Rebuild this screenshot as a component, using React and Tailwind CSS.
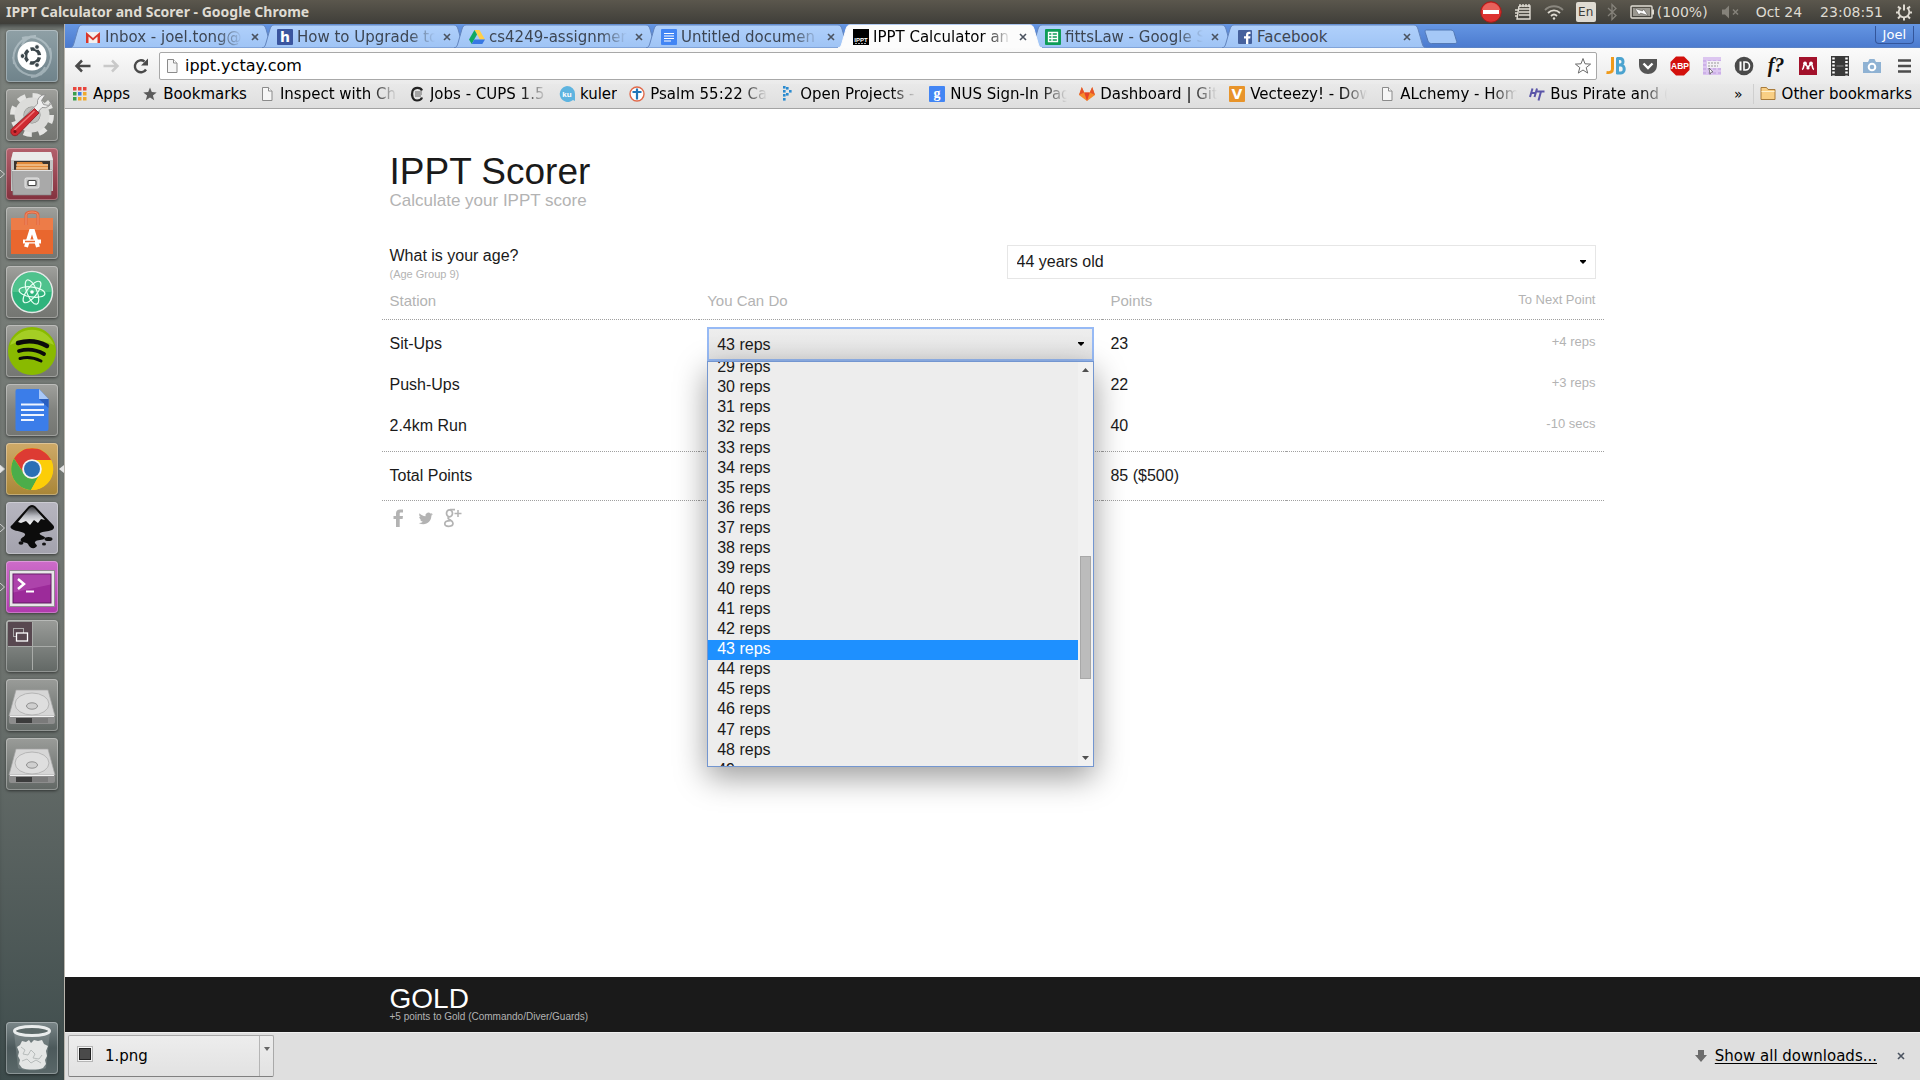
import React from 'react';

const FADE = '[mask-image:linear-gradient(to_right,black_calc(100%-26px),transparent)]';

/* ---------- small icons ---------- */

const PageIcon = () => (
  <svg viewBox="0 0 16 16" className="h-4 w-4">
    <path d="M3.500 1.500h6l3.500 3.500v9.500h-9.500z" fill="#f6f6f6" stroke="#8b8b8b" />
    <path d="M9.500 1.500v3.500h3.500" fill="#fff" stroke="#8b8b8b" />
  </svg>
);

const Gmail = () => (
  <svg viewBox="0 0 16 16" className="h-4 w-4">
    <path d="M1 3h14v11H1z" fill="#f4f0ee" />
    <path d="M1 14V3l7 6 7-6v11h-2.500V7.500L8 11.500 3.500 7.500V14z" fill="#d9372b" />
  </svg>
);

const Letter = ({ bg, children, fg = '#fff', size = 14, y = 13, family = 'DejaVu Sans' }) => (
  <svg viewBox="0 0 16 16" className="h-4 w-4">
    <rect width="16" height="16" rx="1" fill={bg} />
    <text x="8" y={y} fill={fg} fontSize={size} fontWeight="700" fontFamily={family} textAnchor="middle">{children}</text>
  </svg>
);

const Drive = () => (
  <svg viewBox="0 0 16 16" className="h-4 w-4">
    <path d="M5.500 1h5L16 10.500h-5z" fill="#ffcf48" />
    <path d="M5.500 1 8 5.500 2.700 15 0 10.500z" fill="#11a861" />
    <path d="M5.300 10.500H16L13.300 15H2.700z" fill="#3777e3" />
  </svg>
);

const DocIcon = () => (
  <svg viewBox="0 0 16 16" className="h-4 w-4">
    <rect width="16" height="16" rx="1" fill="#4285f4" />
    <path d="M3 4.500h10M3 7h10M3 9.500h10M3 12h7" stroke="#fff" strokeWidth="1.200" />
  </svg>
);

const IpptIcon = () => (
  <svg viewBox="0 0 16 16" className="h-4 w-4">
    <rect width="16" height="16" fill="#000" />
    <text x="8" y="12.500" fill="#fff" fontSize="6" fontWeight="700" fontFamily="Liberation Sans" textAnchor="middle">IPPT</text>
    <path d="M2 14.500h12" stroke="#aaa" strokeDasharray="2 1" />
  </svg>
);

const SheetIcon = () => (
  <svg viewBox="0 0 16 16" className="h-4 w-4">
    <rect width="16" height="16" rx="1" fill="#0f9d58" />
    <path d="M3.500 3.500h9v9h-9zM3.500 6.500h9M3.500 9.500h9M7 3.500v9" fill="none" stroke="#fff" strokeWidth="1.300" />
  </svg>
);

const Facebook = () => (
  <svg viewBox="0 0 16 16" className="h-4 w-4">
    <rect x="1" y="1" width="14" height="14" rx="1" fill="#45619d" />
    <path d="M9 15V9.500H7V7.300h2V6c0-2.200 1.200-3.200 3-3.200h1.500V5h-1.200c-.8 0-1 .4-1 1.100v1.200h2.200l-.3 2.200h-1.900V15z" fill="#fff" />
  </svg>
);

const AppsIcon = () => (
  <svg viewBox="0 0 16 16" className="h-4 w-4">
    {['#e8453c', '#e8453c', '#e8453c', '#3a9f4b', '#3f7de0', '#f0a92c', '#3a9f4b', '#f0a92c', '#f0a92c'].map((c, i) => (
      <rect key={i} x={1 + (i % 3) * 5} y={1 + Math.floor(i / 3) * 5} width="3.500" height="3.500" fill={c} />
    ))}
  </svg>
);

const StarSolid = () => (
  <svg viewBox="0 0 16 16" className="h-4 w-4">
    <path d="m8 1.500 1.800 4.600 4.900.3-3.800 3.100 1.300 4.800L8 11.600l-4.200 2.700 1.300-4.800-3.800-3.100 4.900-.3z" fill="#5b5b5b" />
  </svg>
);

const Cups = () => (
  <svg viewBox="0 0 16 16" className="h-4 w-4" fill="none" stroke="#222">
    <path d="M13 4.500C11.500 1 5 .8 3.500 5 2 10 4 14.500 8 14.500c3 0 4.500-1.500 5-3" strokeWidth="2.200" />
    <path d="M6 6h7M6 8h7M6 10h6" strokeWidth="1.200" stroke="#666" />
  </svg>
);

const Kuler = () => (
  <svg viewBox="0 0 16 16" className="h-4 w-4">
    <path d="M8 0a8 8 0 0 1 8 8v7l-2-1A8 8 0 1 1 8 0z" fill="#5eb4e0" />
    <text x="8" y="11" fontSize="8" fontWeight="700" fill="#fff" textAnchor="middle" fontFamily="Liberation Sans">ku</text>
  </svg>
);

const Cross = () => (
  <svg viewBox="0 0 16 16" className="h-4 w-4">
    <circle cx="8" cy="8" r="7" fill="#fff" stroke="#e0694a" strokeWidth="1.400" />
    <path d="M8 2.500v11M3.500 6h9" stroke="#2477b8" strokeWidth="2.200" />
  </svg>
);

const Dots = () => (
  <svg viewBox="0 0 16 16" className="h-4 w-4" fill="#2b8bd0">
    {[[4, 0], [7, 1], [10, 4], [7, 7], [4, 8], [4, 12], [4, 4]].map(([x, y], i) => (
      <rect key={i} x={x} y={y} width="2.600" height="2.600" />
    ))}
  </svg>
);

const Gitlab = () => (
  <svg viewBox="0 0 16 16" className="h-4 w-4">
    <path d="M8 15 0 9l2.800-8 2.400 5.500h5.600L13.200 1 16 9z" fill="#f58a2c" />
    <path d="M8 15 5.200 6.500h5.600z" fill="#e5432a" />
    <path d="m0 9 2.800-8 2.400 5.500zM16 9l-2.800-8-2.400 5.500z" fill="#e5532a" />
  </svg>
);

const Ht = () => (
  <svg viewBox="0 0 16 16" className="h-4 w-4" fill="none" stroke="#5a55a8" strokeWidth="2">
    <path d="M3.500 2.500 1 11M8 2.500 5.500 11M2 7h5M8 5.500h7.500M12 5.500 9.500 14.500" />
  </svg>
);

const Folder = () => (
  <svg viewBox="0 0 16 16" className="h-4 w-4">
    <path d="M1 13.500v-12h5.500l1.500 2h7v10z" fill="#f9cf84" stroke="#a87b3c" />
    <path d="M1.500 5.500h13" stroke="#fff0cc" />
  </svg>
);

const Close = ({ label }) => (
  <button type="button" aria-label={label} className="flex h-4 w-4 shrink-0 items-center justify-center">
    <svg viewBox="0 0 8 8" className="h-2 w-2"><path d="m1 1 6 6M7 1 1 7" stroke="#4b5360" strokeWidth="1.600" /></svg>
  </button>
);

/* ---------- desktop panel ---------- */

const TopPanel = () => (
  <header className="flex h-6 items-center justify-between bg-linear-to-b from-[#5b574d] to-[#3f3e39] pr-[7px] pl-1.5 text-[#dfdbd2]">
    <span className="font-['Noto_Sans',sans-serif] text-sm font-bold">IPPT Calculator and Scorer - Google Chrome</span>
    <div className="flex items-center text-sm">
      <svg viewBox="0 0 22 22" className="h-[22px] w-[22px]">
        <circle cx="11" cy="11" r="10.300" fill="#dd3230" stroke="#a81d1a" />
        <path d="M2 9a9.200 9.200 0 0 1 18 0z" fill="#f08078" opacity=".6" />
        <rect x="3" y="9" width="16" height="4" fill="#fff" />
      </svg>
      <svg viewBox="0 0 18 18" className="ml-3 h-[18px] w-[18px]" fill="none" stroke="#dfdbd2" strokeWidth="1.400">
        <path d="M5 3h11v13H3l2-13M5 6h11M5 9h11M5 12h11M6 1v3M9 1v3M12 1v3M15 1v3" />
        <path d="M1 7h3M1 10h3M1 13h3" />
      </svg>
      <svg viewBox="0 0 20 18" className="ml-3 h-[18px] w-5" fill="none" stroke="#dfdbd2" strokeWidth="1.800">
        <path d="M1 7c5-5 13-5 18 0" stroke="#8a877f" />
        <path d="M4 10c3.500-3.500 8.500-3.500 12 0M7 13c2-2 4-2 6 0" />
        <circle cx="10" cy="15.500" r="1.200" fill="#dfdbd2" stroke="none" />
      </svg>
      <span className="ml-3 flex h-5 w-5 items-center justify-center rounded-xs bg-[#dfdbd2] text-xs text-[#3c3b37]">En</span>
      <svg viewBox="0 0 12 18" className="ml-2.5 h-[18px] w-3" fill="none" stroke="#85827a" strokeWidth="1.300">
        <path d="m2 5 8 7.500-4 4V1.500l4 4L2 13" />
      </svg>
      <svg viewBox="0 0 25 14" className="ml-3 h-3.5 w-[25px]">
        <rect x="1" y="1" width="21" height="12" rx="1" fill="none" stroke="#dfdbd2" strokeWidth="1.400" />
        <rect x="3" y="3" width="17" height="8" fill="#9b9890" />
        <path d="M23 4.500v5" stroke="#dfdbd2" strokeWidth="2" />
        <path d="M5 3.500 12.500 6l1-2L18 10.500 10.500 8l-1.500 2z" fill="#fff" stroke="#4a4843" strokeWidth=".5" />
      </svg>
      <span className="ml-0.5">(100%)</span>
      <svg viewBox="0 0 18 14" className="ml-3.5 h-3.5 w-[18px]">
        <path d="M0 4.500h3l4-4v13l-4-4H0z" fill="#85827a" />
        <path d="m11 4.500 5 5m0-5-5 5" stroke="#85827a" strokeWidth="1.500" />
      </svg>
      <span className="ml-4">Oct 24</span>
      <span className="ml-[18px]">23:08:51</span>
      <svg viewBox="0 0 18 18" className="ml-3 h-[18px] w-[18px]" fill="none" stroke="#dfdbd2">
        <path d="M6 4.700a5.300 5.300 0 1 0 6 0" strokeWidth="1.800" />
        <path d="M9 1.500v6" strokeWidth="2" />
        <path d="M9 14v3.500M1 9.500h3M14 9.500h3M3 3.500 5.200 5.700M15 3.500l-2.200 2.200M3 15.500l2.200-2.200M15 15.500l-2.200-2.200" strokeWidth="2" />
      </svg>
    </div>
  </header>
);

/* ---------- launcher ---------- */

const art = 'h-[52px] w-[52px]';

const UbuntuArt = () => (
  <svg viewBox="0 0 52 52" className={art}>
    <path d="M8 34C5 18 16 6 30 6c-8 1-12 4-14 9M44 18c4 14-4 28-19 29 8-2 12-5 14-10M16 8c14-4 28 4 29 19M36 44C22 49 9 41 7 27" fill="none" stroke="#d5e0e4" strokeWidth="2" opacity=".45" />
    <circle cx="26" cy="26" r="14.500" fill="#fff" />
    <circle cx="26.500" cy="26" r="7" fill="none" stroke="#3b464b" strokeWidth="3.500" strokeDasharray="12 2.660" strokeDashoffset="-1.500" />
    <circle cx="16.500" cy="26" r="2.400" fill="#3b464b" stroke="#fff" />
    <circle cx="31" cy="17" r="2.400" fill="#3b464b" stroke="#fff" />
    <circle cx="31" cy="35" r="2.400" fill="#3b464b" stroke="#fff" />
  </svg>
);

const SettingsArt = () => (
  <svg viewBox="0 0 52 52" className={art}>
    <circle cx="26" cy="26" r="19" fill="none" stroke="#e4e4e2" strokeWidth="6" strokeDasharray="8 6.920" />
    <circle cx="26" cy="26" r="13" fill="none" stroke="#dcdcda" strokeWidth="9" />
    <circle cx="26" cy="26" r="8" fill="#bdbdbb" />
    <path d="M46 11.500a8 8 0 0 1-10 7L12 45a4 4 0 0 1-6-5.500L31.500 15a8 8 0 0 1 8-9.500l-4 6 2 4 5 1z" fill="#eee" stroke="#888" strokeWidth=".8" />
    <path d="M28.500 19.500 33 24 12 45.500a4.200 4.200 0 0 1-6-6z" fill="#cf2a31" stroke="#8d151c" strokeWidth=".8" />
    <path d="m28.500 22-20 19" stroke="#ef7577" strokeWidth="1.500" />
    <circle cx="9" cy="42.500" r="1.500" fill="#7a1016" />
  </svg>
);

const FilesArt = () => (
  <svg viewBox="0 0 52 52" className={art}>
    <path d="M7 4h38l2 8v31H5V12z" fill="#c3c3c3" />
    <path d="M7 4h38l2 8H5z" fill="#eaeaea" />
    <path d="M8 13h36v9H8z" fill="#3a3430" />
    <path d="M11 14h25l1 2h5v6H10z" fill="#e0893a" />
    <path d="M10 17h32M10 20h32" stroke="#fbe3c0" strokeWidth="1.200" />
    <path d="M6 22h40l-1 25H7z" fill="#a9a9a9" stroke="#888" strokeWidth=".6" />
    <path d="M6 22.500h40" stroke="#e0e0e0" />
    <rect x="19" y="30" width="14" height="10" rx="1.500" fill="#c7c7c7" stroke="#e7e7e7" />
    <rect x="22" y="32.500" width="8" height="5" rx="1" fill="#fff" stroke="#444" strokeWidth="1.200" />
  </svg>
);

const SoftwareArt = () => (
  <svg viewBox="0 0 52 52" className={art}>
    <path d="M5 11h42v36H5z" fill="#e9672e" />
    <path d="M5 11h42v12H5z" fill="#f08a5a" opacity=".6" />
    <path d="M20 18V8c0-4 12-4 12 0v10" fill="none" stroke="#e0643c" strokeWidth="3" />
    <path d="M20 18V8c0-4 12-4 12 0v10" fill="none" stroke="#f19470" strokeWidth="1" />
    <path d="M20 40 25 24h2l5 16" fill="none" stroke="#fff" strokeWidth="4" />
    <path d="M17 34.500h18" stroke="#fff" strokeWidth="4" />
    <path d="M19 34.500h10" stroke="#e9672e" strokeWidth="1.500" />
  </svg>
);

const AtomArt = () => (
  <svg viewBox="0 0 52 52" className={art}>
    <circle cx="26" cy="26" r="20.500" fill="#2fb37c" stroke="#e5e9e7" strokeWidth="1.500" />
    <path d="M6.500 26a19.500 19.500 0 0 1 39 0z" fill="#8ddfae" opacity=".35" />
    <g fill="none" stroke="#e6fff2" strokeWidth="1.200">
      <ellipse cx="26" cy="26" rx="13" ry="5" transform="rotate(8 26 26)" />
      <ellipse cx="26" cy="26" rx="13" ry="5" transform="rotate(68 26 26)" />
      <ellipse cx="26" cy="26" rx="13" ry="5" transform="rotate(128 26 26)" />
    </g>
    <circle cx="26" cy="26" r="1.800" fill="#fff" />
  </svg>
);

const SpotifyArt = () => (
  <svg viewBox="0 0 52 52" className={art}>
    <circle cx="26" cy="26" r="24" fill="#89ba00" />
    <path d="M4 20a23.500 23.500 0 0 1 44 0c-12-6-32-6-44 0z" fill="#b5dc3c" opacity=".6" />
    <g fill="none" stroke="#0b0b0b" strokeLinecap="round">
      <path d="M12 18c10-3 20-2 29 3" strokeWidth="4.500" />
      <path d="M13 26c9-2.500 17-1.500 25 3" strokeWidth="3.800" />
      <path d="M14 33.500c7-2 14-1 21 2.500" strokeWidth="3" />
    </g>
  </svg>
);

const DocsArt = () => (
  <svg viewBox="0 0 52 52" className={art}>
    <path d="M12 5h21l9.500 10v30a2 2 0 0 1-2 2h-29a2 2 0 0 1-2-2V7a2 2 0 0 1 2-2z" fill="#3b7de9" />
    <path d="M33 5v10h9.500z" fill="#a9c8f8" />
    <path d="M33 15h9.500v9z" fill="#2a5fc0" />
    <path d="M15 20.500h23M15 26h23M15 31h23M15 36h13" stroke="#eef4ff" strokeWidth="2.200" />
  </svg>
);

const ChromeArt = () => (
  <svg viewBox="0 0 52 52" className={art}>
    <circle cx="26" cy="26" r="21" fill="#fccd08" />
    <path d="M8 15.500A21 21 0 0 1 44.200 15.500L45 17H26a9 9 0 0 0-8 13.500z" fill="#dd3b33" />
    <path d="M8 15.500 18.200 31a9 9 0 0 0 15.600 0L25 47A21 21 0 0 1 8 15.500z" fill="#4bad4a" />
    <path d="M45.200 17H26a9 9 0 0 1 7.800 14L25 47a21 21 0 0 0 20.200-30z" fill="#fccd08" />
    <circle cx="26" cy="26" r="9.800" fill="#f3f3f3" />
    <circle cx="26" cy="26" r="8" fill="#2b6fb5" />
  </svg>
);

const InkscapeArt = () => (
  <svg viewBox="0 0 52 52" className={art}>
    <defs>
      <linearGradient id="inkFace" x1="0" y1="0" x2="0" y2="1">
        <stop offset="0" stopColor="#3a3b40" />
        <stop offset=".5" stopColor="#b9bbc2" />
        <stop offset="1" stopColor="#ffffff" />
      </linearGradient>
    </defs>
    <path d="M26 3c2 0 3 1 4 2l17 18c2 2 1 4-1 5-4 2-9 1-12 3-2 2 6 3 5 5-2 3-8 1-10 4-1 2 4 3 1 5-3 3-7 0-8-3-1-2-6-1-7-3-2-3 5-4 4-7-2-3-8-2-13-5-2-1-2-3 0-4L22 5c1-1 2-2 4-2z" fill="#0c0c0c" />
    <path d="M26 5c1 0 2 .7 3 1.700L39 18l-4-1-3 4-4-3-4 5-4-4-5 2-3-1L23 6.700C24 5.700 25 5 26 5z" fill="url(#inkFace)" />
    <ellipse cx="42.500" cy="37" rx="4" ry="2" fill="#111" />
    <ellipse cx="15" cy="41" rx="2.500" ry="1.800" fill="#111" />
    <ellipse cx="38" cy="42" rx="2" ry="1.500" fill="#111" />
  </svg>
);

const TerminalArt = () => (
  <svg viewBox="0 0 52 52" className={art}>
    <rect x="3.500" y="9.500" width="45" height="36" fill="#e8e6e8" stroke="#8f8b90" />
    <rect x="7" y="13" width="38" height="29" fill="#9c2b9a" stroke="#5f1a60" />
    <path d="M7.500 13.500h37v10l-37 8z" fill="#c868c6" opacity=".4" />
    <path d="m12 18 6 5-6 5" fill="none" stroke="#fff" strokeWidth="2.500" />
    <path d="M20 30.500h8" stroke="#fff" strokeWidth="2" />
  </svg>
);

const WorkspaceArt = () => (
  <svg viewBox="0 0 52 52" className={art}>
    <path d="M2 2h24v24H2z" fill="#584850" />
    <path d="M26.500 2v48M2 26.500h48" stroke="#a9aca9" />
    <rect x="7.500" y="8.500" width="10" height="8" fill="none" stroke="#aaa" />
    <rect x="10.500" y="13" width="11" height="8" fill="#584850" stroke="#fff" strokeWidth="1.300" />
  </svg>
);

const DiskArt = () => (
  <svg viewBox="0 0 52 52" className={art}>
    <path d="M10 11h32l7 26H3z" fill="#d6d6d6" stroke="#a5a5a5" strokeWidth=".7" />
    <path d="M3 37h46v6a2 2 0 0 1-2 2H5a2 2 0 0 1-2-2z" fill="#8d8d8d" />
    <path d="M10 39h30v5H10z" fill="#3c3c3c" />
    <path d="M26 39h16v5H26z" fill="#7a7a7a" />
    <ellipse cx="26" cy="25" rx="17" ry="11" fill="#dedede" stroke="#b5b5b5" />
    <ellipse cx="26" cy="27" rx="5.500" ry="3.200" fill="#cfcfcf" stroke="#8f8f8f" />
    <path d="M4 37.500h44" stroke="#f2f2f2" />
  </svg>
);

const TrashArt = () => (
  <svg viewBox="0 0 52 52" className={art}>
    <path d="m8 10 4 36c3 3 25 3 28 0l4-36z" fill="#a9b3b3" opacity=".3" />
    <path d="m11 25 3-2 2-4 4 1 3-2 2 3 3-3 4 1 4-1 2 4 4 2-2 5 1 5-2 4 1 4-3 4c-5 2-16 2-21 0l-3-4 1-4-2-4 1-4z" fill="#e4e6e5" />
    <path d="m15 25 4 3-2 4 5 1 3-5 4 4-2 4 6 1 3-4M16 39l5-2 4 4 5-3 5 3" fill="none" stroke="#b7bcbb" strokeWidth="1" />
    <ellipse cx="26" cy="9" rx="17.500" ry="4.500" fill="#5c6969" stroke="#e9ecec" strokeWidth="3" />
  </svg>
);

const Tile = ({ label, tint, children, left, right }) => (
  <button type="button" aria-label={label} className="relative flex w-full justify-center">
    <span className={`block h-[52px] w-[52px] overflow-hidden rounded-sm shadow-[inset_0_0_0_1px_rgba(255,255,255,0.3),0_1px_3px_rgba(0,0,0,0.5)] ${tint}`}>
      {children}
    </span>
    {left && (
      <svg viewBox="0 0 5 8" className="absolute top-[22px] left-0 h-2 w-[5px]">
        <path d="M0 0l4.500 4L0 8" fill={left === 'solid' ? '#e4e4e4' : 'none'} stroke="#d0d0d0" />
      </svg>
    )}
    {right && (
      <svg viewBox="0 0 5 8" className="absolute top-[22px] right-0 h-2 w-[5px]">
        <path d="M5 0 0 4l5 4z" fill="#e4e4e4" />
      </svg>
    )}
  </button>
);

const gray = 'bg-linear-to-b from-[#a0a19d] via-[#81837f] to-[#747672]';
const dim = 'bg-linear-to-b from-[#9a9c99] to-[#626865]';

const Launcher = () => (
  <nav aria-label="Launcher" className="flex w-[65px] shrink-0 flex-col justify-between border-r border-[#b9b5ad] bg-linear-to-b from-[#7c827d] via-[#6f7470] via-60% to-[#3e4c4c] pt-1.5 pb-1.5 shadow-[inset_0_6px_6px_-4px_rgba(0,0,0,0.6)]">
    <div className="flex flex-col gap-[7px]">
      <Tile label="Search" tint="bg-linear-to-b from-[#8fa0a6] to-[#6f838b]"><UbuntuArt /></Tile>
      <Tile label="System Settings" tint={gray}><SettingsArt /></Tile>
      <Tile label="Files" tint="bg-linear-to-b from-[#b3606c] to-[#83313e]" left="open"><FilesArt /></Tile>
      <Tile label="Software Center" tint={gray}><SoftwareArt /></Tile>
      <Tile label="Atom" tint={gray}><AtomArt /></Tile>
      <Tile label="Spotify" tint={gray}><SpotifyArt /></Tile>
      <Tile label="Google Docs" tint={gray}><DocsArt /></Tile>
      <Tile label="Google Chrome" tint="bg-linear-to-b from-[#cfaa68] to-[#a98637]" left="solid" right><ChromeArt /></Tile>
      <Tile label="Inkscape" tint="bg-linear-to-b from-[#b7b6c0] to-[#a3a2ad]" left="open"><InkscapeArt /></Tile>
      <Tile label="Terminal" tint="bg-linear-to-b from-[#cd6cc9] to-[#b03aae]" left="open"><TerminalArt /></Tile>
      <Tile label="Workspaces" tint={dim}><WorkspaceArt /></Tile>
      <Tile label="Disk" tint={dim}><DiskArt /></Tile>
      <Tile label="Second disk" tint={dim}><DiskArt /></Tile>
    </div>
    <Tile label="Trash" tint="bg-linear-to-b from-[#7b8789] via-[#4c595b] to-[#5a6869]"><TrashArt /></Tile>
  </nav>
);

/* ---------- browser chrome ---------- */

const tabs = [
  { title: 'Inbox - joel.tong@', icon: <Gmail />, faded: true },
  { title: 'How to Upgrade to', icon: <Letter bg="#3a559f">h</Letter>, faded: true },
  { title: 'cs4249-assignmen', icon: <Drive />, faded: true },
  { title: 'Untitled documen', icon: <DocIcon />, faded: true },
  { title: 'IPPT Calculator an', icon: <IpptIcon />, active: true, faded: true },
  { title: 'fittsLaw - Google S', icon: <SheetIcon />, faded: true },
  { title: 'Facebook', icon: <Facebook /> },
];

const Tab = ({ title, icon, active, faded }) => (
  <div role="tab" aria-selected={!!active} className={`relative -mr-3 flex h-6 w-[204px] items-center pt-0.5 pr-[11px] pl-[15px] ${active ? 'z-10' : ''}`}>
    <svg viewBox="0 0 204 24" preserveAspectRatio="none" className="absolute inset-0 h-full w-full">
      <defs>
        <linearGradient id="tabFill" x1="0" y1="0" x2="0" y2="1">
          <stop offset="0" stopColor="#b0d0fb" />
          <stop offset="1" stopColor="#9fc4f5" />
        </linearGradient>
      </defs>
      <path d="M0 24c3-1 3-2 4-5l4-14c1-3 2-4 4-4h180c2 0 3 1 4 4l4 14c1 3 1 4 4 5z" fill={active ? '#fcfcfc' : 'url(#tabFill)'} stroke={active ? '#fcfcfc' : '#6284bd'} />
    </svg>
    <span className="relative shrink-0">{icon}</span>
    <span className={`relative ml-1 flex-1 overflow-hidden text-[15px] leading-5 whitespace-nowrap ${faded ? FADE : ''} ${active ? 'text-black' : 'text-[#3d4653]'}`}>{title}</span>
    <span className="relative ml-1 flex"><Close label={`Close ${title}`} /></span>
  </div>
);

const TabStrip = () => (
  <div className="flex h-6 items-start justify-between border-b border-[#5a82c4] bg-linear-to-b from-[#6596e3] to-[#4c7bcf] pr-1.5 pl-[5px]">
    <div role="tablist" className="flex">
      {tabs.map((t) => <Tab key={t.title} {...t} />)}
      <button type="button" aria-label="New tab" className="relative ml-2 h-6 w-9">
        <svg viewBox="0 0 36 24" className="h-6 w-9">
          <path d="M4.500 6h24c2 0 3 1 3.500 2.500l2.700 9c.3 1-.2 2-1.700 2H9.500c-2 0-3-1-3.500-2.500L3.300 8.500C3 7 3 6 4.500 6z" fill="#a5c8f7" stroke="#5379b6" />
        </svg>
      </button>
    </div>
    <button type="button" className="mt-0.5 h-[18px] rounded-b-sm border border-t-0 border-[#33559a] px-[7px] text-[13px] leading-4 text-white">Joel</button>
  </div>
);

const Bookmark = ({ icon, faded, children }) => (
  <a href="#" className="flex shrink-0 items-center gap-[5px]">
    {icon}
    <span className={`overflow-hidden whitespace-nowrap ${faded ? `w-[117px] ${FADE}` : ''}`}>{children}</span>
  </a>
);

const extensions = [
  ['JetBrains', <svg viewBox="0 0 20 20" className="h-5 w-5" fill="none" strokeWidth="3"><path d="M6.500 1v12c0 3-2 4-6 3.500" stroke="#ef9a1a" /><path d="M11.500 2v16M10.500 2.600H14c4 0 4 6.400 0 6.400h-2 3c4.300 0 4.300 8 0 8h-4.500" stroke="#4ba3cf" /></svg>],
  ['Pocket', <svg viewBox="0 0 20 20" className="h-5 w-5"><path d="M1 3h18v6c0 12-18 12-18 0z" fill="#555" /><path d="m5.500 7.500 4.500 4.500 4.500-4.500" fill="none" stroke="#fff" strokeWidth="2.400" /></svg>],
  ['Adblock Plus', <svg viewBox="0 0 20 20" className="h-5 w-5"><path d="M6 .500h8l5.500 5.500v8L14 19.500H6L.500 14V6z" fill="#d3100c" /><text x="10" y="13.300" fontSize="8.500" fontWeight="700" fontFamily="Liberation Sans" fill="#fff" textAnchor="middle">ABP</text></svg>],
  ['Page ruler', <svg viewBox="0 0 20 20" className="h-5 w-5"><rect x="1" y="1" width="18" height="18" fill="#dcc6f0" /><path d="M1 5h18M1 9h18M1 13h18M1 17h18" stroke="#bd9be0" strokeDasharray="3 2" /><path d="M5 5h14v7H5z" fill="#f3f0f5" /><path d="M6 7h12M6 10h10" stroke="#999" strokeDasharray="2 1" /><path d="m7 12 4 4-2 .3-1 2z" fill="#fff" stroke="#555" strokeWidth=".7" /></svg>],
  ['Password manager', <svg viewBox="0 0 20 20" className="h-5 w-5"><circle cx="10" cy="10" r="9.300" fill="#4a4a4a" /><path d="M6.500 5.500v9" stroke="#fff" strokeWidth="2" /><path d="M10 6h1.500a4 4 0 0 1 0 8H10z" fill="#4a4a4a" stroke="#fff" strokeWidth="1.600" /></svg>],
  ['WhatFont', <svg viewBox="0 0 20 20" className="h-5 w-5 overflow-visible"><text x="10" y="16" fontSize="20" fontStyle="italic" fontWeight="700" fontFamily="Liberation Serif" fill="#111" textAnchor="middle">f?</text></svg>],
  ['Mendeley', <svg viewBox="0 0 20 20" className="h-5 w-5"><rect x="1" y="1" width="18" height="18" fill="#a3122b" /><path d="M4 13.500c1.800-.5 1.300-2.500 2-4.500M16 13.500c-1.800-.5-1.300-2.500-2-4.500M7.500 8.500 10 11l2.500-2.500" fill="none" stroke="#fff" strokeWidth="1.600" /><circle cx="7" cy="7.500" r="1.900" fill="#fff" /><circle cx="13" cy="7.500" r="1.900" fill="#fff" /><circle cx="10" cy="12" r="1.600" fill="#fff" /></svg>],
  ['Video', <svg viewBox="0 0 20 20" className="h-5 w-5"><rect x="1" y="0" width="18" height="20" fill="#3a3a3a" /><path d="M3.500 1.500v18M16.500 1.500v18" stroke="#fff" strokeWidth="2.500" strokeDasharray="2 1.500" /><path d="M6.500 10h7" stroke="#888" /></svg>],
  ['Screenshot', <svg viewBox="0 0 20 20" className="h-5 w-5"><path d="M1 6h5l1.500-3h5L14 6h5v11H1z" fill="#8fb2d3" /><circle cx="10" cy="11" r="3.300" fill="none" stroke="#fff" strokeWidth="2" /></svg>],
  ['Menu', <svg viewBox="0 0 20 20" className="h-5 w-5"><path d="M4 4.500h13M4 10h13M4 15.500h13" stroke="#4c4c4c" strokeWidth="2.600" /></svg>],
];

const Toolbar = () => (
  <div className="flex h-9 items-center bg-linear-to-b from-[#fbfbfb] to-[#ebebeb] pr-1.5 pl-2">
    <button type="button" aria-label="Back" className="w-5"><svg viewBox="0 0 20 20" className="h-5 w-5"><path d="M17.500 10H4M9 4.500 3.500 10 9 15.500" fill="none" stroke="#4a4a4a" strokeWidth="2.500" /></svg></button>
    <button type="button" aria-label="Forward" className="ml-2 w-5"><svg viewBox="0 0 20 20" className="h-5 w-5"><path d="M2.500 10H16M11 4.500l5.500 5.500-5.500 5.500" fill="none" stroke="#c9c9c9" strokeWidth="2.500" /></svg></button>
    <button type="button" aria-label="Reload" className="ml-2.5 w-5"><svg viewBox="0 0 20 20" className="h-5 w-5"><path d="M15 13.500A6 6 0 1 1 13.500 5.500" fill="none" stroke="#4a4a4a" strokeWidth="2.400" /><path d="M17 2.500v7h-7z" fill="#4a4a4a" /></svg></button>
    <div className="ml-2 flex h-7 flex-1 items-center rounded-xs border border-[#a8a8a8] bg-white pr-1 pl-1">
      <PageIcon />
      <input aria-label="Address" defaultValue="ippt.yctay.com" className="ml-[5px] h-6 flex-1 bg-transparent text-base text-black outline-none" />
      <button type="button" aria-label="Bookmark this page">
        <svg viewBox="0 0 18 18" className="h-[18px] w-[18px]"><path d="m9 1.500 2 5.300 5.600.300-4.400 3.500 1.500 5.500L9 13l-4.700 3.100 1.500-5.500L1.400 7.100 7 6.800z" fill="#fff" stroke="#6b6b6b" /></svg>
      </button>
    </div>
    <div className="ml-[9px] flex gap-3">
      {extensions.map(([name, icon]) => <button key={name} type="button" aria-label={name}>{icon}</button>)}
    </div>
  </div>
);

const BookmarksBar = () => (
  <div className="flex h-[25px] items-center gap-3 border-b border-[#a3a3a3] bg-linear-to-b from-[#e9e9e9] to-[#dedede] pr-2 pb-1 pl-[7px] text-[15px] leading-5 text-black">
    <Bookmark icon={<AppsIcon />}>Apps</Bookmark>
    <Bookmark icon={<StarSolid />}>Bookmarks</Bookmark>
    <Bookmark faded icon={<PageIcon />}>Inspect with Ch</Bookmark>
    <Bookmark faded icon={<Cups />}>Jobs - CUPS 1.5</Bookmark>
    <Bookmark icon={<Kuler />}>kuler</Bookmark>
    <Bookmark faded icon={<Cross />}>Psalm 55:22 Ca</Bookmark>
    <Bookmark faded icon={<Dots />}>Open Projects -</Bookmark>
    <Bookmark faded icon={<Letter bg="#4285f4" family="Liberation Serif" y={12}>g</Letter>}>NUS Sign-In Pag</Bookmark>
    <Bookmark faded icon={<Gitlab />}>Dashboard | Git</Bookmark>
    <Bookmark faded icon={<Letter bg="#e8942a">V</Letter>}>Vecteezy! - Dow</Bookmark>
    <Bookmark faded icon={<PageIcon />}>ALchemy - Hom</Bookmark>
    <Bookmark faded icon={<Ht />}>Bus Pirate and (</Bookmark>
    <div className="ml-auto flex items-center gap-1.5">
      <button type="button" aria-label="More bookmarks" className="mr-1 text-sm leading-5">»</button>
      <div className="h-5 w-px bg-[#cfcfcf]" />
      <Folder />
      <a href="#">Other bookmarks</a>
    </div>
  </div>
);

/* ---------- page ---------- */

const SelectArrow = () => (
  <svg viewBox="0 0 6 4" className="pointer-events-none absolute top-[15px] right-2.5 h-1 w-1.5"><path d="M0 0h6v1L3 4 0 1z" fill="#000" /></svg>
);

const reps = Array.from({ length: 21 }, (_, i) => 29 + i);

const RepsPicker = () => (
  <div className="relative h-[34px]">
    <select aria-label="Sit-Ups reps" defaultValue="43" className="h-full w-full appearance-none border-2 border-[#97baf5] bg-linear-to-b from-[#eeeeee] to-[#e4e4e4] pt-0.5 pl-2 text-base text-[#1a1a1a] outline-none">
      {reps.map((n) => <option key={n} value={n}>{n} reps</option>)}
    </select>
    <SelectArrow />
    <div className="absolute top-full right-0 left-0 z-20 flex h-[406px] overflow-hidden border border-[#7396d0] bg-[#ededed] shadow-[0_10px_30px_rgba(0,0,0,0.4)]">
      <ul role="listbox" aria-label="Reps" className="-mt-1 grid h-[423px] flex-1 auto-rows-fr">
        {reps.map((n) => (
          <li key={n} role="option" aria-selected={n === 43} className={`pl-[9px] text-base leading-[18px] ${n === 43 ? 'bg-[#1e90ff] text-white' : 'text-[#1a1a1a]'}`}>{n} reps</li>
        ))}
      </ul>
      <div className="flex w-[15px] flex-col items-center bg-[#f1f1f1] py-1.5">
        <svg viewBox="0 0 7 4" className="h-1 w-[7px]"><path d="M0 4h7L3.500 0z" fill="#505050" /></svg>
        <div className="mt-[184px] h-[123px] w-[11px] border border-[#a8a8a8] bg-[#bcbcbc]" />
        <svg viewBox="0 0 7 4" className="mt-auto h-1 w-[7px]"><path d="M0 0h7L3.500 4z" fill="#505050" /></svg>
      </div>
    </div>
  </div>
);

const th = 'border-b border-dotted border-[#a0a0a0] px-2 pt-1.5 pb-2 text-left align-top text-[15px] leading-5 font-normal text-[#b3b3b3]';
const td = 'px-2 pt-3.5 pb-[7px] align-top text-base leading-5';
const tdLast = 'border-b border-dotted border-[#a0a0a0] px-2 pt-3.5 pb-[15px] align-top text-base leading-5';
const tdTotal = 'border-b border-dotted border-[#a0a0a0] px-2 py-3.5 align-top text-base leading-5';
const hint = 'text-right text-[13px] leading-4 text-[#b3b3b3]';

const Page = () => (
  <div className="flex flex-1 flex-col bg-white font-['Liberation_Sans',Arial,sans-serif] text-[#1a1a1a]">
    <main className="mx-auto w-full max-w-[1222px] flex-1 pt-[43px]">
      <div className="px-2">
        <h1 className="text-[37px] leading-10">IPPT Scorer</h1>
        <p className="text-[17px] leading-[18px] text-[#b3b3b3]">Calculate your IPPT score</p>
        <div className="mt-[35px] flex h-10 items-start gap-7">
          <div className="flex-1 pt-px">
            <label htmlFor="age" className="block text-base leading-5">What is your age?</label>
            <p className="text-[11px] leading-4 text-[#b3b3b3]">(Age Group 9)</p>
          </div>
          <div className="relative flex-1">
            <select id="age" className="h-[34px] w-full appearance-none border border-[#e6e6e6] bg-white pl-[9px] text-base outline-none">
              <option>44 years old</option>
            </select>
            <SelectArrow />
          </div>
        </div>
      </div>
      <table className="w-full table-fixed border-separate border-spacing-0">
        <colgroup>
          <col className="w-[26%]" /><col className="w-[33%]" /><col className="w-[15%]" /><col className="w-[26%]" />
        </colgroup>
        <thead>
          <tr>
            <th className={th}>Station</th>
            <th className={th}>You Can Do</th>
            <th className={th}>Points</th>
            <th className={th}><div className={`${hint} pt-px`}>To Next Point</div></th>
          </tr>
        </thead>
        <tbody>
          <tr>
            <td className={td}>Sit-Ups</td>
            <td className="px-2 pt-[7px] align-top"><RepsPicker /></td>
            <td className={td}>23</td>
            <td className={td}><div className={hint}>+4 reps</div></td>
          </tr>
          <tr>
            <td className={td}>Push-Ups</td>
            <td className={td} />
            <td className={td}>22</td>
            <td className={td}><div className={hint}>+3 reps</div></td>
          </tr>
          <tr>
            <td className={tdLast}>2.4km Run</td>
            <td className={tdLast} />
            <td className={tdLast}>40</td>
            <td className={tdLast}><div className={hint}>-10 secs</div></td>
          </tr>
          <tr>
            <td className={tdTotal}>Total Points</td>
            <td className={tdTotal} />
            <td className={tdTotal}>85 ($500)</td>
            <td className={tdTotal} />
          </tr>
        </tbody>
      </table>
      <div className="mt-[7px] flex items-center gap-[7px] px-[7px]">
        <a href="#" aria-label="Facebook"><svg viewBox="0 0 20 20" className="h-5 w-5"><path d="M7 19v-8H4.500V8H7V5.500C7 3 8.500 1.500 11 1.500h3v3h-2c-1 0-1.300.4-1.300 1.300V8H14l-.4 3h-2.900v8z" fill="#b3b3b3" /></svg></a>
        <a href="#" aria-label="Twitter"><svg viewBox="0 0 20 20" className="h-5 w-5"><path d="M16.800 6c-.6.300-1.100.400-1.700.500.600-.4 1-.9 1.200-1.600-.6.300-1.200.6-1.800.7a2.900 2.900 0 0 0-5 2.600C7.100 8 5 7 3.600 5.200c-.8 1.300-.4 3 .9 3.900-.5 0-.9-.1-1.300-.3 0 1.300.9 2.500 2.300 2.800-.4.100-.9.100-1.300.1.400 1.100 1.400 1.900 2.700 2-1.200.9-2.600 1.300-4.200 1.200C8.700 18.500 15.500 14.500 15.400 7.600c.6-.4 1-.9 1.400-1.600z" fill="#b3b3b3" /></svg></a>
        <a href="#" aria-label="Google Plus"><svg viewBox="0 0 20 20" className="h-5 w-5" fill="none" stroke="#b3b3b3"><ellipse cx="6.500" cy="5.300" rx="3" ry="3.500" strokeWidth="1.700" /><path d="M7 1.600h5M5.500 9c-1 1-.2 1.700.8 2.400 1.600 1 3.700 1.900 3.700 3.900 0 2-2 3-4.200 3-2.400 0-4-.8-4-2.500 0-2 2.200-3.200 5.700-3.200" strokeWidth="1.700" /><path d="M11.500 5.500h7M15 2v7" strokeWidth="1.500" /></svg></a>
      </div>
    </main>
    <footer className="bg-[#1a1a1a] pt-2.5 pb-[9px] text-white">
      <div className="mx-auto w-full max-w-[1222px] px-2">
        <p className="text-[28px] leading-6">GOLD</p>
        <p className="text-[10px] leading-3 text-[#b3b3b3]">+5 points to Gold (Commando/Diver/Guards)</p>
      </div>
    </footer>
  </div>
);

const DownloadBar = () => (
  <div className="flex h-12 items-center justify-between border-t border-[#efefef] bg-[#dfdfdf] pr-[11px] pb-px pl-[3px] text-[15px] text-black">
    <div className="flex h-[42px] w-[206px] rounded-xs border border-[#a9a9a9] border-b-[#808080] bg-linear-to-b from-[#ededed] to-[#e2e2e2]">
      <button type="button" className="flex flex-1 items-center gap-3 pl-2">
        <svg viewBox="0 0 16 16" className="mb-1 h-4 w-4">
          <rect x=".5" y=".5" width="15" height="15" fill="#f4f4f4" stroke="#b5b5b5" />
          <rect x="2.500" y="2.500" width="11" height="11" fill="#4a4a4a" stroke="#222" />
        </svg>
        1.png
      </button>
      <button type="button" aria-label="Download options" className="w-[14px] border-l border-[#b5b5b5] pb-3.5">
        <svg viewBox="0 0 6 4" className="mx-auto h-1 w-1.5"><path d="M0 0h6L3 4z" fill="#666" /></svg>
      </button>
    </div>
    <div className="flex items-center">
      <svg viewBox="0 0 12 12" className="h-3 w-3"><path d="M3 0h6v5h3l-6 7-6-7h3z" fill="#6c6c6c" /></svg>
      <a href="#" className="mr-4 ml-2 underline underline-offset-2">Show all downloads...</a>
      <Close label="Close downloads bar" />
    </div>
  </div>
);

export default function App() {
  return (
    <div className="flex min-h-screen flex-col overflow-x-hidden font-['DejaVu_Sans',Verdana,sans-serif]">
      <TopPanel />
      <div className="flex flex-1">
        <Launcher />
        <div className="flex min-w-0 flex-1 flex-col">
          <TabStrip />
          <Toolbar />
          <BookmarksBar />
          <Page />
          <DownloadBar />
        </div>
      </div>
    </div>
  );
}
